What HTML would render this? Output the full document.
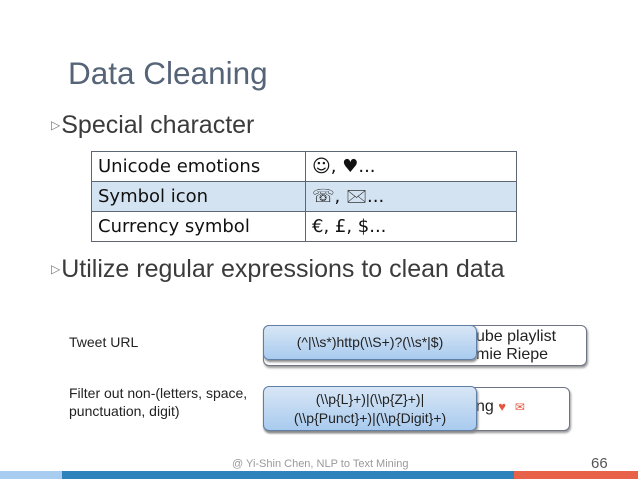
<!DOCTYPE html>
<html><head><meta charset="utf-8"><style>
*{margin:0;padding:0;box-sizing:border-box}
body{width:638px;height:479px;background:#fff;position:relative;overflow:hidden;font-family:"Liberation Sans",sans-serif}
.a{position:absolute;white-space:nowrap}
.title{left:68px;top:55px;font-size:31.5px;color:#566477}
.bul{font-size:25px;color:#3b3b3b}
.bul span{font-size:12px;color:#777;vertical-align:4px;margin-right:1px}
table{position:absolute;left:91px;top:151px;width:426px;border-collapse:collapse;font-family:"DejaVu Sans",sans-serif;font-size:18px;color:#111}
td{border:1.5px solid #5d6673;height:30px;padding:0 6px;line-height:28px}
td:first-child{width:214px}
tr.h td{background:#d4e3f1}
.lbl{font-size:14px;color:#222;line-height:18px}
.back{position:absolute;background:#fff;border:1.5px solid #6d7585;border-radius:6px;box-shadow:1px 2px 2px #999;font-size:16px;color:#222}
.front{position:absolute;background:linear-gradient(#d8e6f5,#a9cbef);border:1.5px solid #5f7fa6;border-radius:6px;box-shadow:1px 2px 2px #888;font-size:14px;color:#222;text-align:center}
</style></head><body>
<div class="a title">Data Cleaning</div>
<div class="a bul" style="left:51px;top:111px"><span>▷</span>Special character</div>
<table>
<tr><td>Unicode emotions</td><td>☺, ♥...</td></tr>
<tr class="h"><td>Symbol icon</td><td>☏, 🖂...</td></tr>
<tr><td>Currency symbol</td><td>€, £, $...</td></tr>
</table>
<div class="a bul" style="left:51px;top:255px"><span>▷</span>Utilize regular expressions to clean data</div>
<div class="a lbl" style="left:69px;top:333px">Tweet URL</div>
<div class="a lbl" style="left:69px;top:384px">Filter out non-(letters, space,<br>punctuation, digit)</div>
<div class="back" style="left:263px;top:325px;width:324px;height:41px"><div class="a" style="left:212px;top:2px;line-height:18px">ube playlist<br>mie Riepe</div></div>
<div class="front" style="left:263px;top:325px;width:214px;height:35px;line-height:33px">(^|\\s*)http(\\S+)?(\\s*|$)</div>
<div class="back" style="left:263px;top:387px;width:307px;height:44px"><div class="a" style="left:212px;top:10px">ng <span style="color:#e4573f;font-size:13px">♥</span> &nbsp;<span style="color:#e4573f;font-size:12px">✉</span></div></div>
<div class="front" style="left:263px;top:386px;width:214px;height:45px;line-height:19px;padding-top:3px">(\\p{L}+)|(\\p{Z}+)|<br>(\\p{Punct}+)|(\\p{Digit}+)</div>
<div class="a" style="left:232px;top:458px;font-size:11px;color:#999">@ Yi-Shin Chen, NLP to Text Mining</div>
<div class="a" style="left:591px;top:455px;font-size:15px;color:#555">66</div>
<div class="a" style="left:0;top:471px;width:62px;height:8px;background:#a9cdf0"></div>
<div class="a" style="left:62px;top:471px;width:452px;height:8px;background:#2f83bd"></div>
<div class="a" style="left:514px;top:471px;width:124px;height:8px;background:#e8624a"></div>
</body></html>
